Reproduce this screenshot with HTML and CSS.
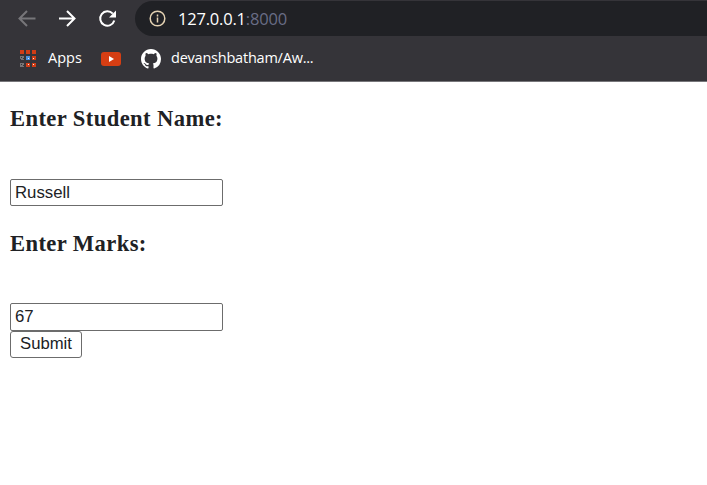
FILE: index.html
```html
<!DOCTYPE html>
<html lang="en">
<head>
<meta charset="utf-8">
<title>Student Marks</title>
<link rel="stylesheet" href="styles.css">
</head>
<body>
<header class="browser">
  <div class="toolbar">
    <nav class="nav">
      <svg class="nav-icon back" viewBox="0 0 18 18"><path d="M17.500 8.500H2M9 1L1.500 8.500 9 16"/></svg>
      <svg class="nav-icon" viewBox="0 0 18 18"><path d="M1 8.500h15.500M9 1l7.500 7.500L9 16"/></svg>
      <svg class="nav-icon" viewBox="0 0 18 18"><path d="M16.300 10.500A7.200 7.200 0 1 1 14.800 3.700"/><path class="solid" d="M18 .5v7h-7z"/></svg>
    </nav>
    <div class="address">
      <svg class="info" viewBox="0 0 18 18"><circle cx="9.500" cy="8.500" r="7.300"/><path d="M9.500 7.500v5M9.500 4.500v1.900"/></svg>
      <span class="url">127.0.0.1<span class="port">:8000</span></span>
    </div>
  </div>
  <div class="bookmarks">
    <svg class="grid" viewBox="0 0 16 17" shape-rendering="crispEdges">
      <path fill="#d03d16" d="M0 0h4v4H0zM6 0h4v4H6zM12 0h4v4h-4zM12 6h4v4h-4zM6 13h4v4H6zM12 13h4v4h-4z"/>
      <path fill="#4a90dc" d="M6 6h4v4H6z"/>
      <path fill="#777576" d="M0 6h4v4H0zM0 13h4v4H0z"/>
      <path fill="#353439" d="M1 7h1v1H1zM3 8h1v1H3zM0 9h1v1H0zM1 14h1v1H1zM3 15h1v1H3z"/>
      <path fill="#eee" d="M8 8h1v1H8zM13 8h1v1h-1zM8 14h1v1H8zM13 14h1v1h-1z"/>
    </svg>
    <span class="apps">Apps</span>
    <svg class="youtube" viewBox="0 0 20 14"><rect width="20" height="14" rx="3" fill="#d63e13"/><path d="M8 4l5 3-5 3z" fill="#fff"/></svg>
    <svg class="github" viewBox="0 0 16 16"><path fill="#fff" d="M8 0C3.580 0 0 3.580 0 8c0 3.540 2.290 6.530 5.470 7.590.4.070.55-.17.55-.38 0-.19-.01-.82-.01-1.490-2.010.37-2.530-.49-2.690-.94-.09-.23-.48-.94-.82-1.130-.28-.15-.68-.52-.01-.53.63-.01 1.080.58 1.230.82.72 1.210 1.870.87 2.330.66.07-.52.28-.87.51-1.070-1.780-.2-3.640-.89-3.640-3.950 0-.87.31-1.590.82-2.150-.08-.2-.36-1.020.08-2.120 0 0 .67-.21 2.200.82.64-.18 1.320-.27 2-.27s1.360.09 2 .27c1.530-1.040 2.200-.82 2.200-.82.44 1.100.16 1.920.08 2.120.51.56.82 1.270.82 2.150 0 3.070-1.870 3.750-3.650 3.950.29.25.54.73.54 1.480 0 1.070-.01 1.930-.01 2.200 0 .21.15.46.55.38A8.010 8.010 0 0 0 16 8c0-4.420-3.580-8-8-8z"/></svg>
    <span class="repo">devanshbatham/Aw...</span>
  </div>
</header>
<main class="page">
  <form class="form">
    <h3 class="label name-label">Enter Student Name:</h3>
    <input class="field" type="text" value="Russell" aria-label="Student name">
    <h3 class="label marks-label">Enter Marks:</h3>
    <input class="field marks" type="text" value="67" aria-label="Marks">
    <button class="submit" type="button">Submit</button>
  </form>
</main>
</body>
</html>
```

FILE: styles.css
```css
* { box-sizing: border-box; }
body { margin: 0; background: #fff; color: #202124; overflow: hidden; }
.browser { height: 82px; background: #353439; border-bottom: 1px solid #77767a; font-family: "Open Sans", "Noto Sans", sans-serif; color: #fff; }
.toolbar { display: flex; height: 36px; padding-top: 1px; }
.nav { display: flex; align-items: center; gap: 22px; width: 135px; padding-left: 18px; }
.nav-icon { width: 18px; height: 18px; flex: none; fill: none; stroke: #fff; stroke-width: 2; }
.nav-icon .solid { fill: #fff; stroke: none; }
.back { stroke: #77767a; }
.address { display: flex; align-items: center; flex: 1; padding-left: 13px; background: #202125; border-radius: 18px 0 0 18px; }
.info { width: 18px; height: 18px; margin-right: 12px; fill: none; stroke: #e5d3b3; stroke-width: 1.5; }
.url { font-size: 16.500px; letter-spacing: -.2px; white-space: nowrap; }
.port { color: #696d86; }
.bookmarks { display: flex; align-items: center; height: 45px; padding-left: 20px; font-size: 14.500px; line-height: 20px; white-space: nowrap; }
.grid { width: 16px; height: 17px; margin-right: 12px; }
.apps { width: 53px; padding-bottom: 1px; }
.youtube { width: 20px; height: 14px; margin-right: 20px; }
.github { width: 20px; height: 20px; margin-right: 10px; }
.repo { padding-bottom: 1px; letter-spacing: -.22px; }
.page { padding: 24px 10px 0; }
.form { display: flex; flex-direction: column; align-items: flex-start; }
.label { margin: 0; height: 26px; font: bold 22.600px/25px "Liberation Serif", serif; letter-spacing: .4px; white-space: nowrap; }
.name-label { margin-bottom: 47px; }
.marks-label { margin: 25px 0 46px; }
.field { width: 213px; height: 27px; margin: 0; padding: 0 4px; border: 1px solid #6c6c6c; border-radius: 2px; background: #fff; color: #202124; font: 16.800px "Liberation Sans", sans-serif; }
.marks { height: 28px; }
.submit { width: 72px; height: 27px; padding: 0 0 2px; border: 1px solid #6c6c6c; border-radius: 3px; background: #fff; color: #202124; font: 16.700px "Liberation Sans", sans-serif; }
```
